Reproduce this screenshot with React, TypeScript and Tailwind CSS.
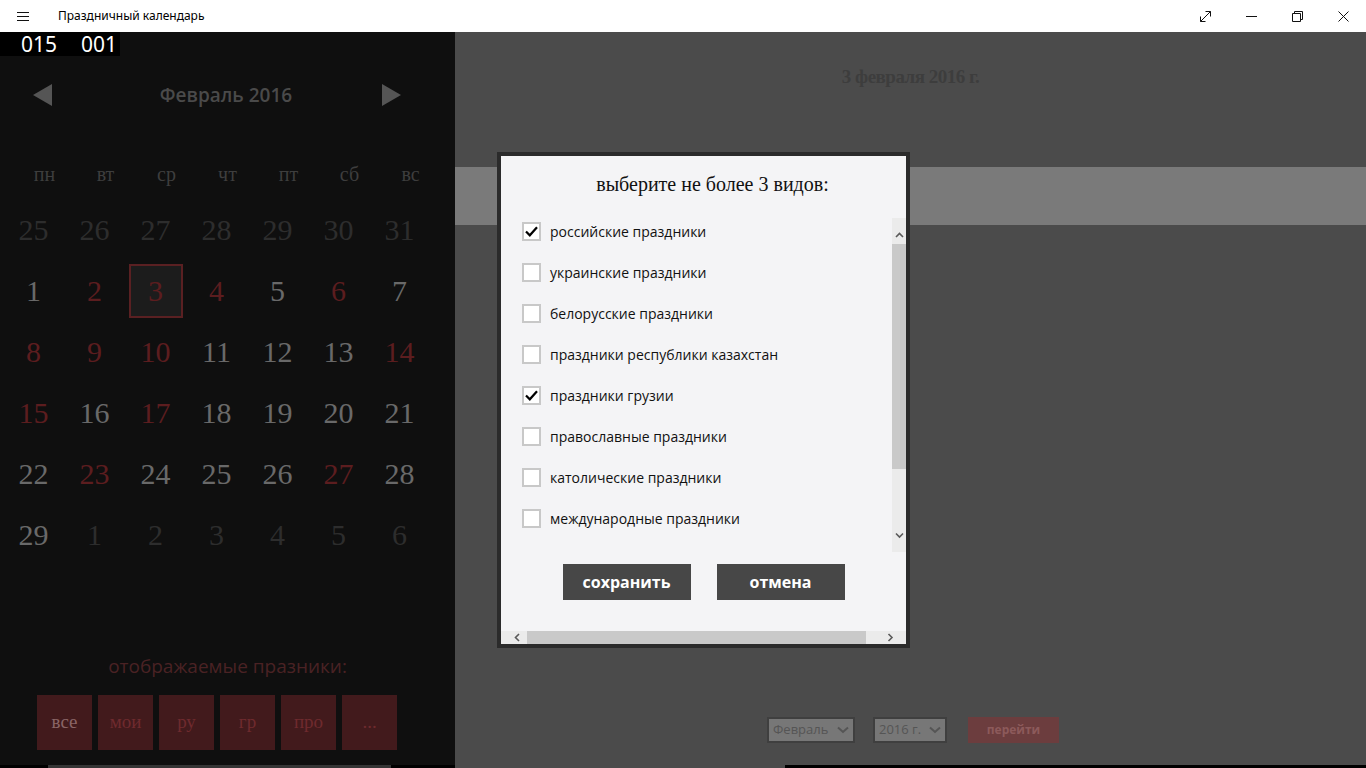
import React from "react";

type DayKind = "dim" | "norm" | "red" | "sel";

const weekDays = ["пн", "вт", "ср", "чт", "пт", "сб", "вс"];

const redDays = [2, 4, 6, 8, 9, 10, 14, 15, 17, 23, 27];

// Feb 2016 grid: 25..31 of January, 1..29 of February, 1..6 of March
const days: { n: number; kind: DayKind }[] = [
  ...[25, 26, 27, 28, 29, 30, 31].map((n) => ({ n, kind: "dim" as DayKind })),
  ...Array.from({ length: 29 }, (_, i) => {
    const n = i + 1;
    const kind: DayKind = n === 3 ? "sel" : redDays.includes(n) ? "red" : "norm";
    return { n, kind };
  }),
  ...[1, 2, 3, 4, 5, 6].map((n) => ({ n, kind: "dim" as DayKind })),
];

const dayColor: Record<DayKind, string> = {
  dim: "text-[#2d2d2d]",
  norm: "text-[#696969]",
  red: "text-[#5c1d1f]",
  sel: "text-[#5c1d1f]",
};

const holidayKinds = [
  { label: "российские праздники", checked: true },
  { label: "украинские праздники", checked: false },
  { label: "белорусские праздники", checked: false },
  { label: "праздники республики казахстан", checked: false },
  { label: "праздники грузии", checked: true },
  { label: "православные праздники", checked: false },
  { label: "католические праздники", checked: false },
  { label: "международные праздники", checked: false },
];

const filterButtons = ["все", "мои", "ру", "гр", "про", "..."];

function TitleBar() {
  return (
    <div className="h-8 bg-white flex items-center font-['Noto_Sans',sans-serif] text-[12px] text-black">
      <div className="w-[58px] flex items-center pl-[17px]">
        <svg width="12" height="9" viewBox="0 0 12 9">
          <path d="M0 0.5H12M0 4.5H12M0 8.5H12" stroke="#111" strokeWidth="1" />
        </svg>
      </div>
      <span className="flex-1">Праздничный календарь</span>
      <div className="flex h-full">
        <div className="w-[46px] flex items-center justify-center">
          <svg width="13" height="13" viewBox="0 0 13 13" fill="none" stroke="#111" strokeWidth="1">
            <path d="M1.5 11.5L11.5 1.5M6.5 1.5H11.5V6.5M1.5 6.5V11.5H6.5" />
          </svg>
        </div>
        <div className="w-[46px] flex items-center justify-center">
          <svg width="11" height="1" viewBox="0 0 11 1">
            <path d="M0 0.5H11" stroke="#111" strokeWidth="1" />
          </svg>
        </div>
        <div className="w-[46px] flex items-center justify-center">
          <svg width="11" height="11" viewBox="0 0 11 11" fill="none" stroke="#111" strokeWidth="1">
            <path d="M0.5 2.5H8.5V10.5H0.5Z M2.5 2.5V0.5H10.5V8.5H8.5" />
          </svg>
        </div>
        <div className="w-[46px] flex items-center justify-center">
          <svg width="11" height="11" viewBox="0 0 11 11" fill="none" stroke="#111" strokeWidth="1">
            <path d="M0.5 0.5L10.5 10.5M10.5 0.5L0.5 10.5" />
          </svg>
        </div>
      </div>
    </div>
  );
}

function CalendarPanel() {
  return (
    <div className="w-[455px] bg-[#0f0f0f] flex flex-col">
      {/* frame counter */}
      <div className="h-6 w-[120px] bg-black flex items-center text-white text-[21px] leading-none font-['Noto_Sans',sans-serif]">
        <span className="ml-[21px] w-[60px]">015</span>
        <span>001</span>
      </div>

      {/* month header */}
      <div className="mt-[18px] h-[42px] flex items-center">
        <div className="w-[33px]" />
        <svg width="19" height="22" viewBox="0 0 19 22">
          <path d="M0 11L19 0V22Z" fill="#555555" />
        </svg>
        <div className="flex-1 text-center font-['Open_Sans',sans-serif] font-semibold text-[19px] text-[#4a4a4a] pl-[18px]">
          Февраль 2016
        </div>
        <svg width="19" height="22" viewBox="0 0 19 22">
          <path d="M19 11L0 0V22Z" fill="#555555" />
        </svg>
        <div className="w-[54px]" />
      </div>

      {/* weekdays */}
      <div className="mt-[43px] h-[30px] pl-[14px] grid grid-cols-[repeat(7,61px)] font-['Liberation_Serif',serif] text-[20px] text-[#3e3e3e]">
        {weekDays.map((d) => (
          <div key={d} className="flex items-center justify-center">
            {d}
          </div>
        ))}
      </div>

      {/* days */}
      <div className="mt-[10px] pl-[3px] grid grid-cols-[repeat(7,61px)] auto-rows-[61px] font-['Liberation_Serif',serif] text-[30px]">
        {days.map((d, i) => (
          <div key={i} className="flex items-center justify-center">
            {d.kind === "sel" ? (
              <div className="w-[54px] h-[54px] border-2 border-[#5a2022] bg-[#1c1c1c] flex items-center justify-center text-[#5c1d1f]">
                {d.n}
              </div>
            ) : (
              <span className={dayColor[d.kind]}>{d.n}</span>
            )}
          </div>
        ))}
      </div>

      {/* shown holidays */}
      <div className="mt-[89px] text-center font-['Open_Sans',sans-serif] text-[19px] text-[#4a2224] leading-[24px]">
        отображаемые празники:
      </div>
      <div className="mt-[17px] flex gap-[6px] pl-[37px]">
        {filterButtons.map((b, i) => (
          <div
            key={b}
            className={`w-[55px] h-[55px] bg-[#421a1c] flex items-center justify-center font-['Liberation_Serif',serif] text-[19px] ${
              i === 0 ? "text-[#8a6566]" : "text-[#6f2a2e]"
            }`}
          >
            {b}
          </div>
        ))}
      </div>
      <div className="flex-1" />
      <div className="h-[3px] flex bg-black">
        <div className="w-[48px]" />
        <div className="w-[343px] bg-[#353535]" />
      </div>
    </div>
  );
}

function DayPanel() {
  return (
    <div className="flex-1 bg-[#4b4b4b] flex flex-col">
      <div className="h-[135px] flex justify-center pt-[33px]">
        <span className="font-['Liberation_Serif',serif] font-bold text-[19px] text-[#3d3d3d] tracking-[-0.5px] h-[24px] leading-[24px]">
          3 февраля 2016 г.
        </span>
      </div>
      <div className="h-[58px] bg-[#7a7a7a]" />
      <div className="flex-1" />
      <div className="flex justify-center gap-[18px] pl-[5px] font-['Open_Sans',sans-serif]">
        <div className="w-[88px] h-[26px] border-2 border-[#3f3f3f] bg-[#777777] flex items-center justify-between px-[4px] text-[13px] text-[#555555]">
          <span>Февраль</span>
          <svg width="12" height="8" viewBox="0 0 12 8" fill="none" stroke="#555" strokeWidth="2">
            <path d="M1 1.5L6 6L11 1.5" />
          </svg>
        </div>
        <div className="w-[74px] h-[26px] border-2 border-[#3f3f3f] bg-[#777777] flex items-center justify-between px-[4px] text-[13px] text-[#555555] mr-[3px]">
          <span>2016 г.</span>
          <svg width="12" height="8" viewBox="0 0 12 8" fill="none" stroke="#555" strokeWidth="2">
            <path d="M1 1.5L6 6L11 1.5" />
          </svg>
        </div>
        <div className="w-[91px] h-[26px] bg-[#6c3d3e] flex items-center justify-center text-[12px] font-bold text-[#8c5a5b]">
          перейти
        </div>
      </div>
      <div className="h-[22px]" />
      <div className="h-[3px] flex bg-black">
        <div className="w-[330px] bg-[#4b4b4b]" />
      </div>
    </div>
  );
}

function Chevron({ dir }: { dir: "up" | "down" | "left" | "right" }) {
  const d = {
    up: "M1 5L4.5 1.5L8 5",
    down: "M1 1.5L4.5 5L8 1.5",
    left: "M5 1L1.5 4.5L5 8",
    right: "M1.5 1L5 4.5L1.5 8",
  }[dir];
  const vertical = dir === "up" || dir === "down";
  return (
    <svg
      width={vertical ? 9 : 7}
      height={vertical ? 7 : 9}
      viewBox={vertical ? "0 0 9 7" : "0 0 7 9"}
      fill="none"
      stroke="#5a5a5a"
      strokeWidth="1.6"
    >
      <path d={d} />
    </svg>
  );
}

function CheckBox({ checked }: { checked: boolean }) {
  return (
    <div className="w-[19px] h-[19px] border-2 border-[#c8c8c8] bg-white flex items-center justify-center">
      {checked && (
        <svg width="13" height="11" viewBox="0 0 13 11" fill="none" stroke="#000" strokeWidth="2.2">
          <path d="M1 5.5L4.8 9.3L12 1.2" />
        </svg>
      )}
    </div>
  );
}

function KindsDialog() {
  return (
    <div className="absolute left-[497px] top-[152px] w-[413px] h-[496px] border-4 border-[#2b2b2b] bg-[#f4f4f6] flex flex-col">
      <div className="h-[55px] flex items-end justify-center pl-[18px] pb-[12px] font-['Liberation_Serif',serif] text-[20px] text-[#111]">
        выберите не более 3 видов:
      </div>
      <div className="h-[339px] flex">
        <div className="flex-1 flex flex-col">
          {holidayKinds.map((k) => (
            <div key={k.label} className="h-[41px] flex items-center pl-[21px] gap-[9px]">
              <CheckBox checked={k.checked} />
              <span className="font-['Open_Sans',sans-serif] text-[14px] text-[#111]">{k.label}</span>
            </div>
          ))}
        </div>
        <div className="w-[14px] mt-[7px] mb-[-2px] bg-[#ebebeb] flex flex-col">
          <div className="h-[26px] flex items-center justify-center pt-[8px]">
            <Chevron dir="up" />
          </div>
          <div className="h-[225px] bg-[#c9c9c9]" />
          <div className="flex-1 flex items-end justify-center pb-[13px]">
            <Chevron dir="down" />
          </div>
        </div>
      </div>
      <div className="flex-1 flex justify-center items-start pt-[14px] gap-[26px] font-['Open_Sans',sans-serif]">
        <div className="w-[128px] h-[36px] bg-[#474747] flex items-center justify-center text-white text-[16px] font-bold">
          сохранить
        </div>
        <div className="w-[128px] h-[36px] bg-[#474747] flex items-center justify-center text-white text-[16px] font-bold">
          отмена
        </div>
      </div>
      <div className="h-[13px] bg-[#ebebeb] flex">
        <div className="w-[26px] flex items-center justify-center pl-[6px]">
          <Chevron dir="left" />
        </div>
        <div className="w-[339px] bg-[#c9c9c9]" />
        <div className="flex-1 flex items-center justify-center pl-[8px]">
          <Chevron dir="right" />
        </div>
      </div>
    </div>
  );
}

export default function App() {
  return (
    <div className="relative w-[1366px] h-[768px] overflow-hidden flex flex-col">
      <TitleBar />
      <div className="flex-1 flex">
        <CalendarPanel />
        <DayPanel />
      </div>
      <KindsDialog />
    </div>
  );
}
